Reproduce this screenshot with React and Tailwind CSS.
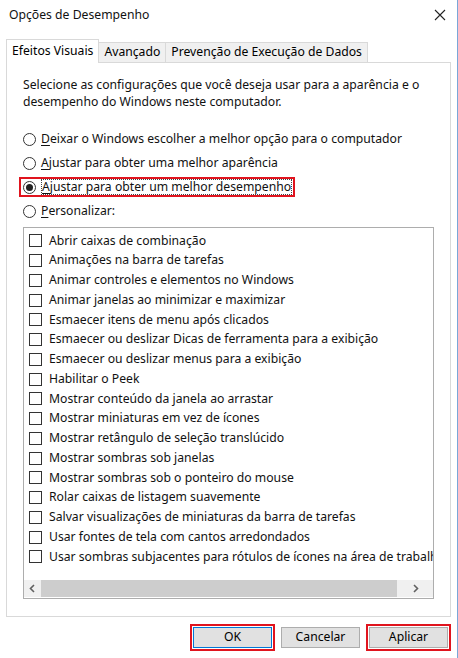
import React from 'react';

const options = [
  'Abrir caixas de combinação',
  'Animações na barra de tarefas',
  'Animar controles e elementos no Windows',
  'Animar janelas ao minimizar e maximizar',
  'Esmaecer itens de menu após clicados',
  'Esmaecer ou deslizar Dicas de ferramenta para a exibição',
  'Esmaecer ou deslizar menus para a exibição',
  'Habilitar o Peek',
  'Mostrar conteúdo da janela ao arrastar',
  'Mostrar miniaturas em vez de ícones',
  'Mostrar retângulo de seleção translúcido',
  'Mostrar sombras sob janelas',
  'Mostrar sombras sob o ponteiro do mouse',
  'Rolar caixas de listagem suavemente',
  'Salvar visualizações de miniaturas da barra de tarefas',
  'Usar fontes de tela com cantos arredondados',
  'Usar sombras subjacentes para rótulos de ícones na área de trabalho',
];

function Radio({ checked, first, rest, boxed }) {
  return (
    <div className="flex items-center h-[22px]">
      <div
        className={
          'flex items-center h-[16px] ' +
          (boxed ? 'outline-2 outline-[#e0141e] -ml-[2px] pl-[2px] pr-[1px]' : '')
        }
      >
        <span className="w-[13px] h-[13px] rounded-full border border-[#333] bg-white flex items-center justify-center">
          {checked && <span className="w-[7px] h-[7px] rounded-full bg-[#222]" />}
        </span>
        <span className={'ml-[5px] leading-[14px] ' + (boxed ? 'border border-dotted border-[#444] -ml-px' : '')}>
          <span className="underline underline-offset-2">{first}</span>
          {rest}
        </span>
      </div>
    </div>
  );
}

export default function App() {
  return (
    <div
      className="w-[458px] h-[658px] bg-white text-[12.2px] text-[#000] relative border-r border-[#7aa7d8] overflow-hidden"
      style={{ fontFamily: '"Segoe UI", "Noto Sans", sans-serif' }}
    >
      {/* title bar */}
      <div className="flex items-center justify-between h-[30px] pl-[9px] pr-[11px]">
        <span className="text-[12.2px] text-[#111]">Opções de Desempenho</span>
        <svg width="12" height="12" viewBox="0 0 12 12">
          <path d="M1 1L11 11M11 1L1 11" stroke="#222" strokeWidth="1.1" />
        </svg>
      </div>

      <div className="px-[6px]">
        {/* tabs */}
        <div className="flex items-end h-[32px] pl-0">
          <div className="h-[24px] px-[5px] border border-b-0 border-[#d9d9d9] bg-white flex items-center relative z-10 -mb-px pb-px">
            Efeitos Visuais
          </div>
          <div className="h-[20px] px-[5px] border border-b-0 border-l-0 border-[#d9d9d9] bg-[#f0f0f0] flex items-center">
            Avançado
          </div>
          <div className="h-[20px] px-[5px] border border-b-0 border-l-0 border-[#d9d9d9] bg-[#f0f0f0] flex items-center">
            Prevenção de Execução de Dados
          </div>
        </div>

        {/* panel */}
        <div className="h-[555px] border border-[#d9d9d9] bg-white pl-[16px] pr-[14px] pt-[13px]">
          <p className="leading-[17px] text-[#111]">
            Selecione as configurações que você deseja usar para a aparência e o
            <br />
            desempenho do Windows neste computador.
          </p>

          <div className="mt-[18px] flex flex-col gap-[2px] text-[#111]">
            <Radio first="D" rest="eixar o Windows escolher a melhor opção para o computador" />
            <Radio first="A" rest="justar para obter uma melhor aparência" />
            <Radio checked boxed first="A" rest="justar para obter um melhor desempenho" />
            <Radio first="P" rest="ersonalizar:" />
          </div>

          {/* list */}
          <div className="mt-[5px] w-[411px] h-[372px] border border-[#adadad] bg-white flex flex-col">
            <div className="flex-1 pt-[3px] pl-[5px] overflow-hidden">
              {options.map((o) => (
                <div key={o} className="flex items-center h-[19.75px] whitespace-nowrap text-[#111]">
                  <span className="w-[13px] h-[13px] border border-[#333] bg-white shrink-0" />
                  <span className="ml-[7px]">{o}</span>
                </div>
              ))}
            </div>
            <div className="h-[17px] flex items-center bg-[#f0f0f0] mb-px">
              <div className="w-[17px] flex justify-center">
                <svg width="7" height="9" viewBox="0 0 7 9">
                  <path d="M5 1L1.5 4.5L5 8" fill="none" stroke="#606060" strokeWidth="1.6" />
                </svg>
              </div>
              <div className="w-[356px] h-[17px] bg-[#cdcdcd]" />
              <div className="flex-1 flex justify-center">
                <svg width="7" height="9" viewBox="0 0 7 9">
                  <path d="M2 1L5.5 4.5L2 8" fill="none" stroke="#606060" strokeWidth="1.6" />
                </svg>
              </div>
            </div>
          </div>
        </div>

        {/* buttons */}
        <div className="flex justify-end gap-[9px] mt-[10px] pr-[3px]">
          <button className="w-[79px] h-[21px] bg-[#e1e1e1] border border-[#0078d7] outline-2 outline-[#e0141e] outline-offset-1">
            OK
          </button>
          <button className="w-[79px] h-[21px] bg-[#e1e1e1] border border-[#adadad]">
            Cancelar
          </button>
          <button className="w-[79px] h-[21px] bg-[#e1e1e1] border border-[#adadad] outline-2 outline-[#e0141e] outline-offset-1">
            Aplicar
          </button>
        </div>
      </div>
    </div>
  );
}
